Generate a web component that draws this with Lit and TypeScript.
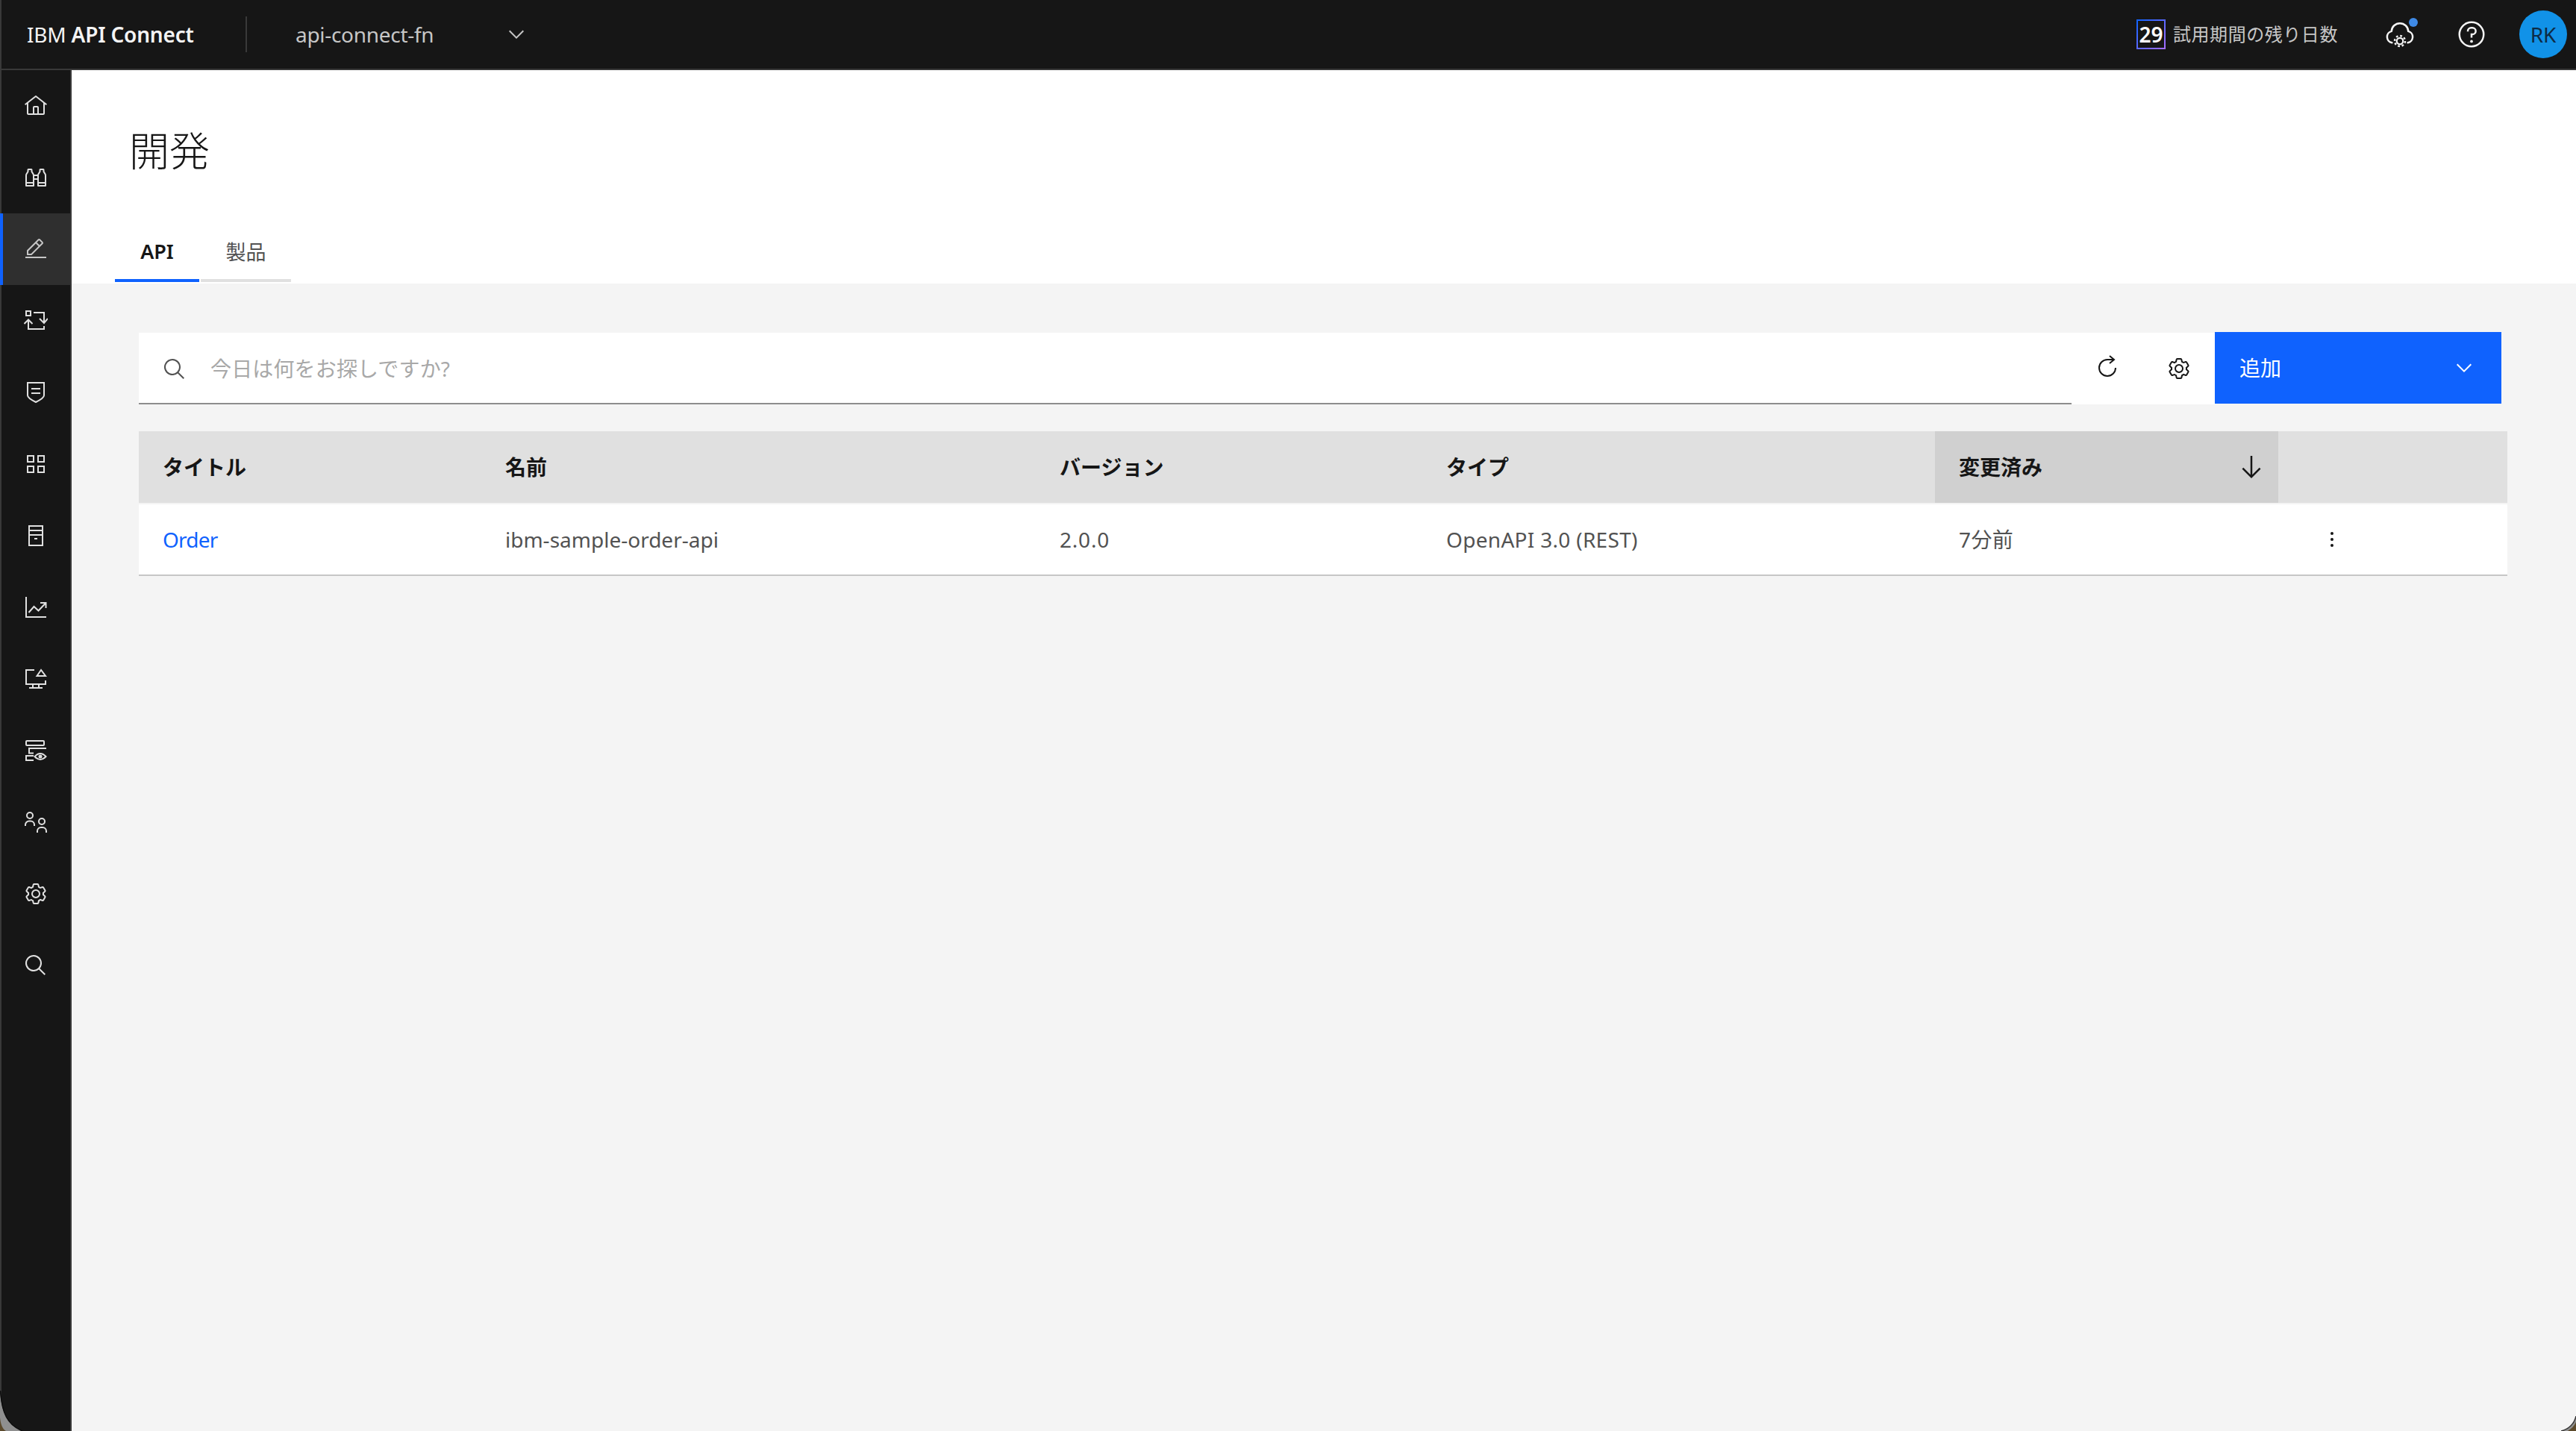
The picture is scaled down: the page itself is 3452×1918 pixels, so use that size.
import { LitElement, html, css, svg } from "lit";
import { customElement } from "lit/decorators.js";

const gearPaths = svg`<path fill="currentColor" d="M27,16.76c0-.25,0-.5,0-.76s0-.51,0-.77l1.92-1.68A2,2,0,0,0,29.3,11L26.94,7a2,2,0,0,0-1.73-1,2,2,0,0,0-.64.1l-2.43.82a11.35,11.35,0,0,0-1.31-.75l-.51-2.52a2,2,0,0,0-2-1.61H13.64a2,2,0,0,0-2,1.61l-.51,2.52a11.48,11.48,0,0,0-1.32.75L7.43,6.06A2,2,0,0,0,6.79,6,2,2,0,0,0,5.06,7L2.7,11a2,2,0,0,0,.41,2.51L5,15.24c0,.25,0,.5,0,.76s0,.51,0,.77L3.11,18.45A2,2,0,0,0,2.7,21L5.06,25a2,2,0,0,0,1.73,1,2,2,0,0,0,.64-.1l2.43-.82a11.35,11.35,0,0,0,1.31.75l.51,2.52a2,2,0,0,0,2,1.61h4.72a2,2,0,0,0,2-1.61l.51-2.52a11.48,11.48,0,0,0,1.32-.75l2.42.82a2,2,0,0,0,.64.1,2,2,0,0,0,1.73-1L29.3,21a2,2,0,0,0-.41-2.51ZM25.21,24l-3.43-1.16a8.86,8.86,0,0,1-2.71,1.57L18.36,28H13.64l-.71-3.55a9.36,9.36,0,0,1-2.7-1.57L6.79,24,4.43,20l2.72-2.4a8.9,8.9,0,0,1,0-3.13L4.43,12,6.79,8l3.43,1.16a8.86,8.86,0,0,1,2.71-1.57L13.64,4h4.72l.71,3.55a9.36,9.36,0,0,1,2.7,1.57L25.21,8,27.57,12l-2.72,2.4a8.9,8.9,0,0,1,0,3.13L27.57,20Z"/><path fill="currentColor" d="M16,22a6,6,0,1,1,6-6A5.94,5.94,0,0,1,16,22Zm0-10a3.91,3.91,0,0,0-4,4,3.91,3.91,0,0,0,4,4,3.91,3.91,0,0,0,4-4A3.91,3.91,0,0,0,16,12Z"/>`;
const searchPath = svg`<path fill="currentColor" d="M29,27.5859l-7.5521-7.5521a11.0177,11.0177,0,1,0-1.4141,1.4141L27.5859,29ZM4,13a9,9,0,1,1,9,9A9.01,9.01,0,0,1,4,13Z"/>`;
const chevronPath = svg`<path fill="currentColor" d="M16 22L6 12l1.4-1.4 8.6 8.6 8.6-8.6L26 12z"/>`;

const ico = (body: unknown, size = 32) =>
  html`<svg width=${size} height=${size} viewBox="0 0 32 32" fill="none" stroke="none">${body}</svg>`;

const navIcons = [
  svg`<path fill="currentColor" d="M16.6123,2.2138a1.01,1.01,0,0,0-1.2427,0L1,13.4194l1.2427,1.5717L4,13.6209V26a2.0041,2.0041,0,0,0,2,2H26a2.0037,2.0037,0,0,0,2-2V13.63L29.7573,15,31,13.4282ZM18,26H14V18h4Zm2,0V18a2.0023,2.0023,0,0,0-2-2H14a2.002,2.002,0,0,0-2,2v8H6V12.0615l10-7.79,10,7.8005V26Z"/>`,
  svg`<g stroke="currentColor" stroke-width="2" stroke-linejoin="round"><path d="M3 27V13Q3 11.500 4 10.500L5.500 8V5.500Q5.500 5 6 5H10Q10.500 5 10.500 5.500V8L12 10.500Q13 11.500 13 13V27Z"/><path d="M19 27V13Q19 11.500 20 10.500L21.500 8V5.500Q21.500 5 22 5H26Q26.500 5 26.500 5.500V8L28 10.500Q29 11.500 29 13V27Z"/><path d="M3 23H13M19 23H29M13 13H19M13 18H19"/></g>`,
  svg`<path fill="currentColor" d="M2 26h28v2H2zM25.4 9c.8-.8.8-2 0-2.8l-3.6-3.6c-.8-.8-2-.8-2.8 0l-15 15V24h6.4l15-15zm-5-5L24 7.6l-3 3L17.4 7l3-3zM6 22v-3.6l10-10l3.6 3.6l-10 10H6z"/>`,
  svg`<g stroke="currentColor" stroke-width="2"><rect x="3" y="3" width="6" height="6"/><path d="M13 5H27V18M21 13L27 19L32 13M0.500 20L6 14.500L11.500 20M6 15V27H27V23"/></g>`,
  svg`<g stroke="currentColor" stroke-width="2"><path d="M5 3H27V20C27 23 22 26 16 29C10 26 5 23 5 20Z"/><path d="M10 11H22M10 17H22"/></g>`,
  svg`<g stroke="currentColor" stroke-width="2"><rect x="5" y="5" width="8" height="8"/><rect x="19" y="5" width="8" height="8"/><rect x="5" y="19" width="8" height="8"/><rect x="19" y="19" width="8" height="8"/></g>`,
  svg`<g stroke="currentColor" stroke-width="2"><rect x="7" y="3" width="18" height="26"/><path d="M7 9H25M7 15H25M14 20H18"/></g>`,
  svg`<g stroke="currentColor" stroke-width="2"><path d="M3 2V29H30M6.500 23L13.500 15L19.500 20.500L29 10.500M22 10H29.500V17"/></g>`,
  svg`<g stroke="currentColor" stroke-width="2"><path d="M14 4H3V23H29V18M12 23V28M20 23V28M7 28H25"/><path d="M23 4L17.500 12H29Z"/></g>`,
  svg`<g stroke="currentColor" stroke-width="2"><rect x="3" y="3" width="24" height="6" rx="1"/><path d="M30 13H7V19.500H13M13 23H3V29H13M14.500 24Q22 16 29.500 24Q22 32 14.500 24Z"/></g><circle cx="22" cy="24" r="2.500" fill="currentColor"/>`,
  svg`<g stroke="currentColor" stroke-width="2"><circle cx="8" cy="7" r="4"/><path d="M2 21V19.500a5 5 0 0 1 5-5h2a5 5 0 0 1 5 5V21"/><circle cx="24" cy="15" r="4"/><path d="M18 30V28a5 5 0 0 1 5-5h2a5 5 0 0 1 5 5V30"/></g>`,
  gearPaths,
  searchPath,
];

@customElement("app-root")
export class AppRoot extends LitElement {
  static styles = css`
    :host { display: block; width: 3452px; height: 1918px; position: relative; overflow: hidden; background: #f4f4f4;
      font-family: "Noto Sans", "Noto Sans CJK JP", sans-serif; font-size: 28px; color: #161616; }
    svg { display: block; flex: none; }
    .header { height: 92px; background: #161616; border-bottom: 2px solid #393939; border-left: 2px solid #393939;
      display: flex; align-items: center; color: #f4f4f4; }
    .brand { margin-left: 34px; width: 293px; letter-spacing: -0.2px; white-space: nowrap; }
    .brand b { font-weight: 600; }
    .divider { width: 2px; height: 48px; background: #393939; }
    .context { margin-left: 65px; width: 280px; color: #c6c6c6; white-space: nowrap; letter-spacing: -0.3px; }
    .chev { color: #c6c6c6; }
    .right { margin-left: auto; display: flex; align-items: center; }
    .trial-num { width: 39px; height: 40px; box-sizing: border-box; border: 2px solid; border-image: linear-gradient(135deg, #0f62fe, #a56eff) 1;
      display: flex; align-items: center; justify-content: center; font-weight: 600; font-size: 28px; color: #fff; }
    .trial-text { margin-left: 10px; padding-bottom: 3px; font-size: 24px; letter-spacing: 0.55px; color: #c6c6c6; white-space: nowrap; width: 223px; }
    .cloud { margin-left: 61px; position: relative; color: #f4f4f4; }
    .dot { position: absolute; width: 12px; height: 12px; border-radius: 50%; background: #3f8ae6; left: 32px; top: -2px; }
    .help { margin-left: 56px; color: #f4f4f4; }
    .avatar { margin: 0 12px 0 44px; width: 64px; height: 64px; border-radius: 50%; background: #1192e8; color: #0d2b45;
      display: flex; align-items: center; justify-content: center; font-size: 28px; }
    .body { display: flex; height: 1824px; }
    .side { width: 92px; background: #161616; border-left: 2px solid #393939; border-right: 2px solid #393939; flex: none; color: #e0e0e0; }
    .nav { height: 96px; display: flex; align-items: center; justify-content: center; box-sizing: border-box; }
    .nav.active { background: #2f2f2f; box-shadow: inset 4px 0 0 #0f62fe; margin-left: -2px; padding-left: 2px; color: #c6c6c6; }
    .main { flex: 1; display: flex; flex-direction: column; min-width: 0; }
    .page-head { height: 286px; background: #fff; display: flex; flex-direction: column; flex: none; box-sizing: border-box; }
    h1 { margin: 68px 0 0 77px; font-size: 54px; font-weight: 300; line-height: 80px; height: 80px; color: #161616; }
    .tabs { margin: 56px 0 0 58px; display: flex; gap: 2px; }
    .tab { height: 76px; box-sizing: content-box; display: flex; align-items: center; justify-content: center; color: #525252; border-bottom: 4px solid #e0e0e0; }
    .tab.on { width: 113px; color: #161616; font-weight: 600; border-bottom-color: #0f62fe; font-size: 27px; }
    .tab.off { width: 121px; font-size: 27px; }
    .content { padding: 65px 92px 0 90px; display: flex; flex-direction: column; gap: 36px; }
    .toolbar { display: flex; align-items: flex-start; margin-right: 8px; height: 97px; }
    .search { flex: 1; height: 96px; margin-top: 1px; box-sizing: border-box; background: #fff; border-bottom: 2px solid #8d8d8d;
      display: flex; align-items: center; gap: 32px; padding-left: 32px; color: #525252; }
    .search svg { margin-top: 3px; }
    .search span { color: #a8a8a8; white-space: nowrap; letter-spacing: 0.15px; }
    .tool { width: 96px; height: 96px; margin-top: 1px; background: #fff; display: flex; align-items: center; justify-content: center; color: #161616; }
    .tool .up { margin-bottom: 6px; }
    .add { width: 384px; height: 96px; background: #0f62fe; color: #fff; display: flex; align-items: center; justify-content: space-between; padding: 0 34px 0 33px; box-sizing: border-box; }
    .add span { padding-bottom: 3px; }
    .table { display: grid; grid-template-columns: 459px 743px 518px 687px 460px 307px; }
    .th { height: 96px; background: #e0e0e0; display: flex; align-items: center; padding-left: 32px; box-sizing: border-box; font-weight: 600; font-size: 28px; color: #161616; white-space: nowrap; }
    .th span { padding-bottom: 3px; }
    .th.sorted { background: #d0d0d0; justify-content: space-between; padding-right: 16px; }
    .td { height: 96px; margin-top: 2px; background: #fff; border-bottom: 2px solid #c6c6c6; box-sizing: border-box; display: flex; align-items: center; padding-left: 32px; color: #525252; white-space: nowrap; }
    .td a { color: #0f62fe; text-decoration: none; letter-spacing: -0.8px; }
    .td .ver { letter-spacing: 0.8px; }
    .td .type { letter-spacing: 0.3px; }
    .td .ago { padding-bottom: 3px; letter-spacing: 0.4px; }
    .td.kebab { padding-left: 56px; color: #161616; }
    .corner { position: absolute; bottom: 0; }
    .corner.l { left: 0; }
    .corner.r { right: 0; }
  `;

  render() {
    return html`
      <div class="header">
        <div class="brand">IBM <b>API Connect</b></div>
        <div class="divider"></div>
        <div class="context">api-connect-fn</div>
        <div class="chev">${ico(chevronPath)}</div>
        <div class="right">
          <div class="trial-num">29</div>
          <div class="trial-text">試用期間の残り日数</div>
          <div class="cloud">
            <svg width="40" height="40" viewBox="0 0 32 32" fill="none" stroke="currentColor" stroke-width="2" stroke-linecap="round">
              <path d="M7.500 25A6.300 6.300 0 0 1 7 12.700A9.010 9.010 0 0 1 25 12.700A6.300 6.300 0 0 1 24.500 25"/>
              <circle cx="16" cy="23.200" r="3.400" stroke-width="1.800"/>
              <circle cx="16" cy="23.200" r="5.600" stroke-linecap="butt" stroke-dasharray="2.200 2.200"/>
            </svg>
            <div class="dot"></div>
          </div>
          <div class="help">${ico(svg`<path fill="currentColor" d="M16,2A14,14,0,1,0,30,16,14,14,0,0,0,16,2Zm0,26A12,12,0,1,1,28,16,12,12,0,0,1,16,28Z"/><circle fill="currentColor" cx="16" cy="23.500" r="1.500"/><path fill="currentColor" d="M17,8H15.500A4.490,4.490,0,0,0,11,12.500V13h2v-.5A2.500,2.500,0,0,1,15.500,10H17a2.500,2.500,0,0,1,0,5H15v4.500h2V17a4.500,4.500,0,0,0,0-9Z"/>`, 40)}</div>
          <div class="avatar">RK</div>
        </div>
      </div>
      <div class="body">
        <div class="side">
          ${navIcons.map((n, i) => html`<div class="nav ${i === 2 ? "active" : ""}">${ico(n)}</div>`)}
        </div>
        <div class="main">
          <div class="page-head">
            <h1>開発</h1>
            <div class="tabs">
              <div class="tab on">API</div>
              <div class="tab off">製品</div>
            </div>
          </div>
          <div class="content">
            <div class="toolbar">
              <div class="search">${ico(searchPath)}<span>今日は何をお探しですか?</span></div>
              <div class="tool"><div class="up">${ico(svg`<g stroke="currentColor" stroke-width="2" fill="none"><path d="M25 7H16A11 11 0 1 0 27 18"/><path d="M19 2L25 7L19 12"/></g>`)}</div></div>
              <div class="tool">${ico(gearPaths)}</div>
              <div class="add"><span>追加</span>${ico(chevronPath)}</div>
            </div>
            <div class="table">
              <div class="th"><span>タイトル</span></div>
              <div class="th"><span>名前</span></div>
              <div class="th"><span>バージョン</span></div>
              <div class="th"><span>タイプ</span></div>
              <div class="th sorted"><span>変更済み</span>${ico(svg`<path fill="currentColor" d="M24.590 16.590L17 24.170V4h-2v20.170l-7.590-7.580L6 18l10 10 10-10-1.410-1.410z"/>`, 40)}</div>
              <div class="th"></div>
              <div class="td"><a href="#">Order</a></div>
              <div class="td">ibm-sample-order-api</div>
              <div class="td"><span class="ver">2.0.0</span></div>
              <div class="td"><span class="type">OpenAPI 3.0 (REST)</span></div>
              <div class="td"><span class="ago">7分前</span></div>
              <div class="td kebab">${ico(svg`<circle cx="16" cy="8" r="2" fill="currentColor"/><circle cx="16" cy="16" r="2" fill="currentColor"/><circle cx="16" cy="24" r="2" fill="currentColor"/>`)}</div>
            </div>
          </div>
        </div>
      </div>
      <svg class="corner l" width="34" height="54" viewBox="0 0 34 54">
        <path d="M0 0C2 30 10 46 30 54H0Z" fill="#8f8f8f"/>
        <path d="M0 36C1 45 3 51 8 54H0Z" fill="#5c4a2c"/>
        <path d="M0.500 0C2.500 30 10 46 30 54" fill="none" stroke="#0c0c0c" stroke-width="1.500"/>
      </svg>
      <svg class="corner r" width="20" height="20" viewBox="0 0 20 20">
        <path d="M20 0C18 10 10 18 0 20H20Z" fill="#8f8f8f"/>
        <path d="M20 8C18 13 14 17 9 20H20Z" fill="#5c4a2c"/>
        <path d="M20 0C18 10 10 18 0 20" fill="none" stroke="#333" stroke-width="1.500"/>
      </svg>
    `;
  }
}
